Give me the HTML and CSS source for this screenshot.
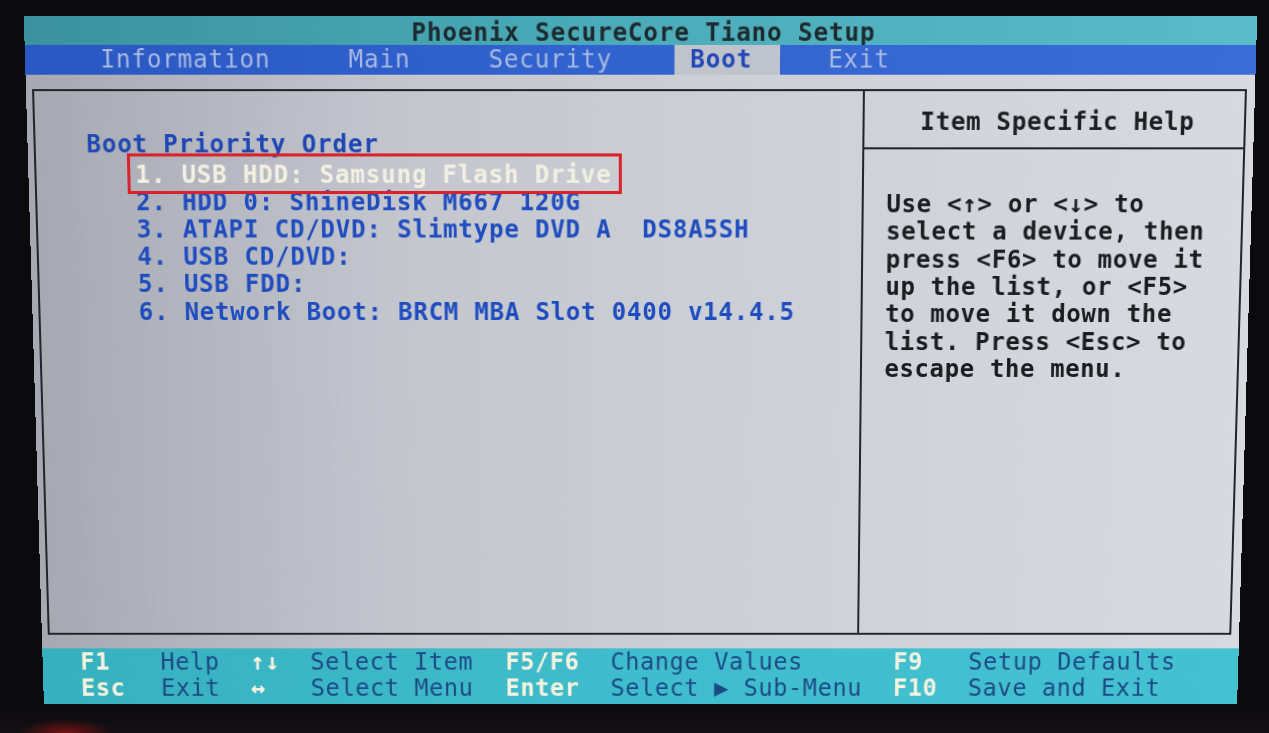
FILE: index.html
```html
<!DOCTYPE html>
<html lang="en">
<head>
<meta charset="utf-8">
<title>Phoenix SecureCore Tiano Setup</title>
<link rel="stylesheet" href="styles.css">
</head>
<body>
<div class="screen">
  <header class="title">Phoenix SecureCore Tiano Setup</header>
  <nav class="menu">
    <span class="tab">Information</span>
    <span class="tab">Main</span>
    <span class="tab">Security</span>
    <span class="tab tab-active">Boot</span>
    <span class="tab">Exit</span>
  </nav>
  <main class="content">
    <div class="frame">
      <section class="list">
        <div class="list-title">Boot Priority Order</div>
        <ol class="items">
          <li class="item item-selected"><span class="mark">1. USB HDD: Samsung Flash Drive</span></li>
          <li class="item">2. HDD 0: ShineDisk M667 120G</li>
          <li class="item">3. ATAPI CD/DVD: Slimtype DVD A  DS8A5SH</li>
          <li class="item">4. USB CD/DVD:</li>
          <li class="item">5. USB FDD:</li>
          <li class="item">6. Network Boot: BRCM MBA Slot 0400 v14.4.5</li>
        </ol>
      </section>
      <aside class="help">
        <div class="help-head">Item Specific Help</div>
        <p class="help-text">Use &lt;↑&gt; or &lt;↓&gt; to
select a device, then
press &lt;F6&gt; to move it
up the list, or &lt;F5&gt;
to move it down the
list. Press &lt;Esc&gt; to
escape the menu.</p>
      </aside>
    </div>
  </main>
  <footer class="keys">
    <span class="k">F1</span><span class="d">Help</span><span class="k">↑↓</span><span class="d">Select Item</span><span class="k">F5/F6</span><span class="d">Change Values</span><span class="k">F9</span><span class="d">Setup Defaults</span>
    <span class="k">Esc</span><span class="d">Exit</span><span class="k">↔</span><span class="d">Select Menu</span><span class="k">Enter</span><span class="d">Select ▶ Sub-Menu</span><span class="k">F10</span><span class="d">Save and Exit</span>
  </footer>
</div>
</body>
</html>
```

FILE: styles.css
```css
html, body {
  margin: 0;
  padding: 0;
}
body {
  width: 1269px;
  height: 733px;
  overflow: hidden;
  background:
    radial-gradient(ellipse 48px 14px at 66px 733px, #761212 0%, rgba(118,18,18,0) 100%),
    linear-gradient(180deg, #0b0a0d 0%, #0b0a0d 96%, #121014 100%);
  font-family: "DejaVu Sans Mono", "Liberation Mono", monospace;
}
.screen {
  margin: 20.9px 0 0 33.6px;
  width: 1212.7px;
  height: 688.8px;
  display: flex;
  flex-direction: column;
  transform: perspective(1500px) rotateX(-4.13deg);
  transform-origin: 50% 50%;
}
.title {
  height: 28.1px;
  box-sizing: border-box;
  padding: 4px 0 0 6px;
  line-height: 24px;
  text-align: center;
  font-size: 24px;
  font-weight: bold;
  letter-spacing: 0.77px;
  color: #1d2a2d;
  background: linear-gradient(90deg, #3b929e 0%, #4aaab7 45%, #5abcc8 100%);
}
.menu {
  height: 29.2px;
  display: flex;
  align-items: stretch;
  padding-left: 59.2px;
  background: linear-gradient(90deg, #2a58c2 0%, #3264cf 50%, #3a6bd6 100%);
  font-size: 24px;
  letter-spacing: 0.78px;
  line-height: 29.2px;
}
.tab {
  padding: 0 15px;
  color: #a9b9e2;
}
.tab + .tab {
  margin-left: 47px;
}
.tab-active {
  padding-right: 27.7px;
  background: #bfc3cc;
  color: #2447b8;
  font-weight: bold;
}
.tab-active + .tab {
  margin-left: 32.3px;
}
.content {
  height: 574.4px;
  box-sizing: border-box;
  display: flex;
  padding: 13.7px 8px 13.4px 6px;
  background: linear-gradient(90deg, #a6a9b2 0%, #c3c6cd 30%, #cdd0d6 60%, #d9dadf 100%);
}
.frame {
  flex: 1;
  display: flex;
  border: 2px solid #232428;
}
.list {
  width: 818.4px;
  box-sizing: border-box;
  padding: 39.3px 0 0 50.2px;
  font-size: 24px;
  font-weight: bold;
  letter-spacing: 0.77px;
  line-height: 27.2px;
  color: #1f4cbf;
}
.list-title {
  color: #1e47b3;
}
.items {
  list-style: none;
  margin: 2.4px 0 0;
  padding: 0 0 0 47.8px;
  line-height: 27.15px;
}
.item {
  white-space: pre;
}
.item-selected {
  color: #f3f0e2;
}
.mark {
  position: relative;
  display: inline-block;
}
.mark::after {
  content: "";
  position: absolute;
  top: -8px;
  left: -8px;
  right: -10px;
  bottom: -5px;
  border: 3px solid #d9222c;
}
.help {
  flex: 1;
  border-left: 2px solid #232428;
  display: flex;
  flex-direction: column;
}
.help-head {
  height: 56.8px;
  box-sizing: border-box;
  padding: 5px 0 0 6px;
  border-bottom: 2px solid #232428;
  display: flex;
  align-items: center;
  justify-content: center;
  font-size: 24px;
  font-weight: bold;
  letter-spacing: 0.6px;
  color: #1d1e22;
}
.help-text {
  margin: 0;
  padding: 41px 0 0 22px;
  white-space: pre;
  font-size: 24px;
  font-weight: bold;
  letter-spacing: 0.62px;
  line-height: 27.4px;
  color: #1b1c20;
}
.keys {
  height: 57.1px;
  box-sizing: border-box;
  padding: 1.1px 0 0 38.3px;
  display: grid;
  grid-template-columns: 81.2px 91.3px 60.8px 197.8px 106.6px 287.1px 76px auto;
  grid-auto-rows: 26.8px;
  align-items: center;
  background: linear-gradient(90deg, #37b0bf 0%, #40bdcc 50%, #44c2d1 100%);
  font-size: 24px;
  letter-spacing: 0.58px;
  white-space: pre;
}
.k {
  color: #f5f2de;
  font-weight: bold;
}
.d {
  color: #1d4a86;
}
```
